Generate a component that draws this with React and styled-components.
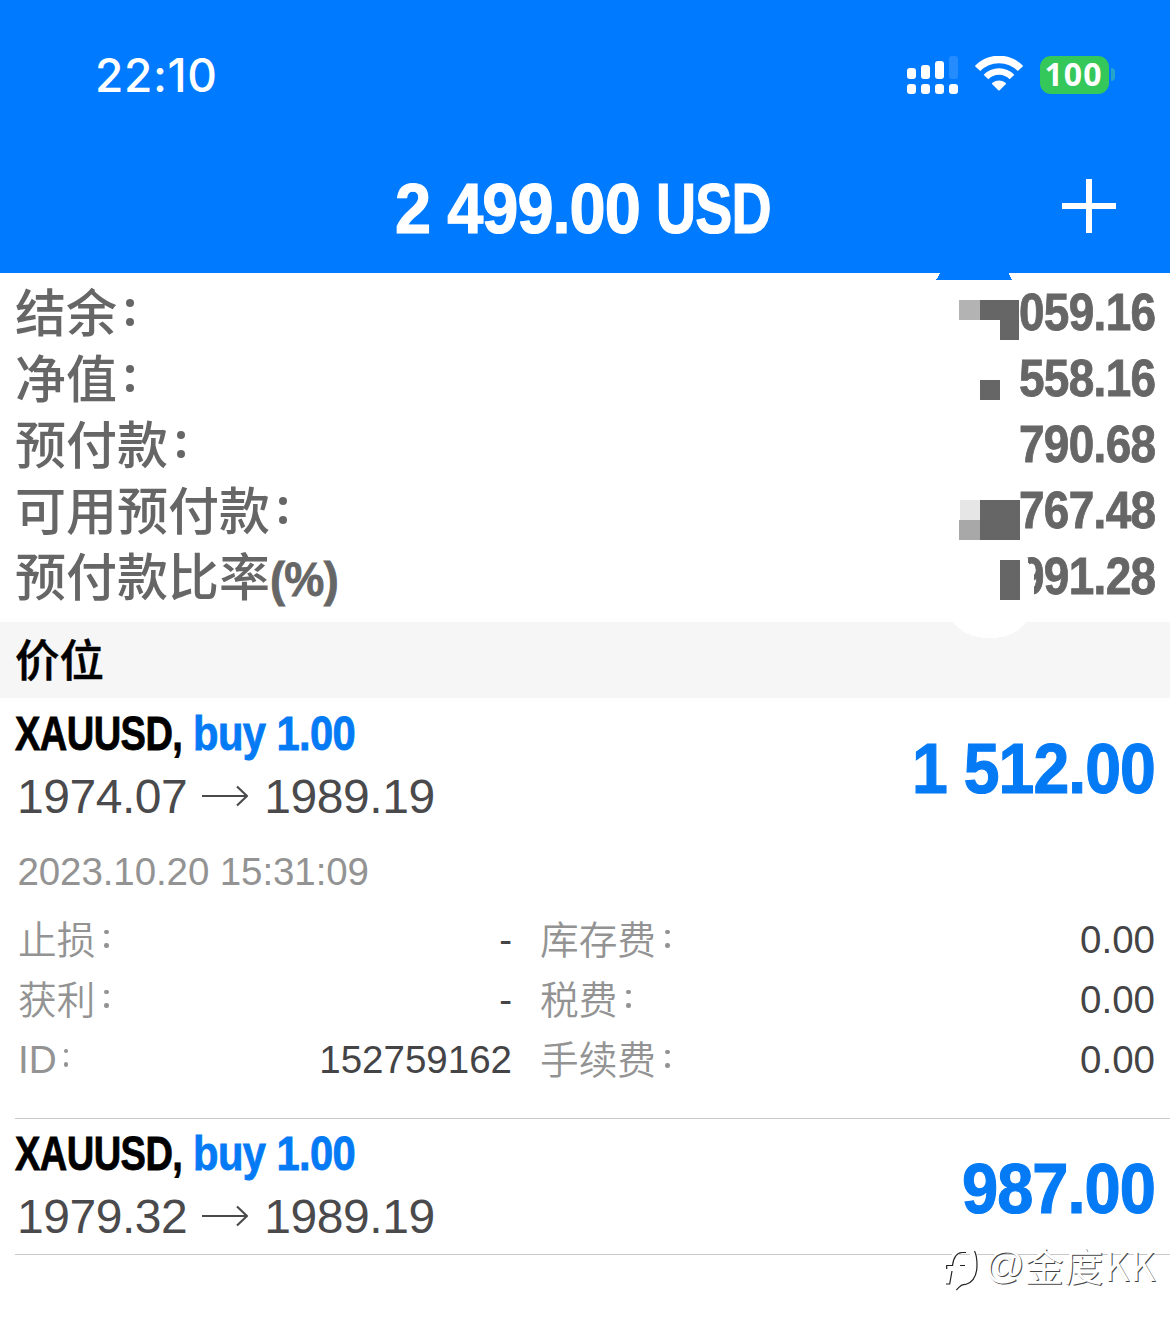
import React, { useLayoutEffect, useRef, useState } from "react";
import styled, { createGlobalStyle } from "styled-components";

const blue = "#007aff";
const linkBlue = "#057af5";
const sans = `"Liberation Sans", "Noto Sans CJK SC", sans-serif`;

const GlobalStyle = createGlobalStyle`
  * {
    box-sizing: border-box;
  }

  body {
    margin: 0;
    background: #fff;
    font-family: ${sans};
  }
`;

const Screen = styled.main`
  position: relative;
  width: 1170px;
  height: 1332px;
  overflow: hidden;
  background: #fff;
`;

const Header = styled.header`
  height: 273px;
  background: ${blue};
  color: #fff;
`;

const StatusBar = styled.div`
  display: flex;
  align-items: center;
  justify-content: space-between;
  height: 149px;
  padding: 0 55px 0 95px;
`;

const Clock = styled.div`
  font: 500 46px/60px Inter, sans-serif;
  letter-spacing: 0.6px;
`;

const StatusIcons = styled.div`
  display: flex;
  align-items: center;
`;

const Signal = styled.svg`
  width: 52px;
  height: 38px;
  margin-right: 15px;
`;

const Wifi = styled.svg`
  width: 50px;
  height: 38px;
  margin-right: 16px;
`;

const Battery = styled.div`
  width: 69px;
  height: 38px;
  padding-right: 2px;
  border-radius: 11px;
  background: #34c759;
  font: 700 32px/36px "Open Sans", sans-serif;
  letter-spacing: 1px;
  text-align: center;
`;

const BatteryCap = styled.div`
  width: 4px;
  height: 13px;
  margin-left: 2px;
  border-radius: 0 6px 6px 0;
  background: #27a5c8;
`;

const TitleBar = styled.div`
  display: flex;
  align-items: center;
  height: 118px;
  padding: 0 54px 0 395px;
`;

const Total = styled.div`
  display: flex;
  flex: 1;
  gap: 16px;
  padding-top: 1px;
`;

const AddIcon = styled.svg`
  width: 54px;
  height: 54px;
  margin-bottom: 4px;
`;

const Fit = styled.div`
  display: flex;
  flex: none;
  width: ${({ $width }) => $width}px;
  font-size: ${({ $size }) => $size}px;
  line-height: 1.15;
  font-weight: 700;
  letter-spacing: -0.015em;
  color: ${({ $color }) => $color};
  white-space: pre;
  -webkit-text-stroke: ${({ $size }) => $size / 60}px currentColor;

  span {
    flex: none;
    transform-origin: 0 50%;
  }
`;

const Summary = styled.section`
  height: 349px;
  padding: 7px 15px 0 15px;
  color: #666;
`;

const SummaryRow = styled.div`
  display: flex;
  align-items: center;
  justify-content: space-between;
  height: 66px;
`;

const SummaryLabel = styled.div`
  display: flex;
  align-items: center;
  padding-top: 4px;
  font: 500 51px/62px ${sans};
`;

const Colon = styled.i`
  display: flex;
  flex-direction: column;
  justify-content: space-between;
  width: ${({ $dot }) => $dot}px;
  height: ${({ $height }) => $height}px;
  margin: 0 0 5px ${({ $gap }) => $gap}px;

  &::before,
  &::after {
    content: "";
    height: ${({ $dot }) => $dot}px;
    border-radius: 50%;
    background: currentColor;
  }
`;

const SectionTitle = styled.h2`
  height: 76px;
  margin: 0;
  padding: 2px 0 0 15px;
  background: #f6f6f6;
  color: #000;
  font: 500 44.5px/76px ${sans};
  -webkit-text-stroke: 0.5px #000;
`;

const Position = styled.article`
  height: ${({ $open }) => ($open ? 421 : 136)}px;
  margin-left: 15px;
  padding-right: 15px;
  border-bottom: 1px solid #c8c8c8;
`;

const PositionHead = styled.div`
  display: flex;
  align-items: flex-start;
  justify-content: space-between;
  height: ${({ $open }) => ($open ? 136 : 135)}px;
  padding-top: ${({ $open }) => ($open ? 2 : 1)}px;
`;

const Profit = styled.div`
  padding-top: 28px;
`;

const Symbol = styled.div`
  display: flex;
  gap: 11px;
  height: 66px;
  align-items: center;
`;

const Prices = styled.div`
  display: flex;
  align-items: center;
  height: 60px;
  padding-left: 2px;
  color: #4a4a4c;
  font-size: 48px;
  letter-spacing: -0.45px;
`;

const Arrow = styled.svg`
  width: 46px;
  height: 22px;
  margin: 0 16px 0 15px;
`;

const OpenedAt = styled.div`
  height: 76px;
  padding-left: 2.5px;
  color: #939393;
  font-size: 38.5px;
  line-height: 76px;
  letter-spacing: -0.1px;
`;

const Details = styled.div`
  display: grid;
  grid-template-columns: 494px 1fr;
  column-gap: 28px;
  padding-left: 3px;
`;

const Detail = styled.div`
  display: flex;
  align-items: center;
  justify-content: space-between;
  height: 60px;
  font-size: 38.5px;
`;

const DetailLabel = styled.div`
  display: flex;
  align-items: center;
  padding-top: ${({ $latin }) => ($latin ? 0 : 2)}px;
  color: #939393;
  font: 350 38.7px/58px ${sans};
`;

const DetailValue = styled.div`
  color: #444446;
`;

const Redaction = styled.svg`
  position: absolute;
  top: 270px;
  left: 930px;
  width: 130px;
  height: 375px;
`;

const Watermark = styled.div`
  position: absolute;
  top: 1238px;
  left: 943px;
  display: flex;
  align-items: center;
  height: 54px;
  color: #fff;
  font: 400 39px/54px ${sans};
  text-shadow: 1px 1px 0 #444;

  svg {
    width: 42px;
    height: 54px;
  }
`;

const Handle = styled.span`
  margin-top: -3px;
  font-family: "Noto Sans CJK SC", sans-serif;
  line-height: 50px;
  letter-spacing: 0.7px;
`;

// Squeezes bold text to the widths of a condensed face.
const Condensed = ({ children, width, size, color }) => {
  const ref = useRef(null);
  const [scale, setScale] = useState(1);

  useLayoutEffect(() => {
    setScale(width / ref.current.offsetWidth);
  }, [children, width, size]);

  return (
    <Fit $width={width} $size={size} $color={color}>
      <span ref={ref} style={{ transform: `scaleX(${scale})` }}>
        {children}
      </span>
    </Fit>
  );
};

const summary = [
  { label: "结余", value: "059.16" },
  { label: "净值", value: "558.16" },
  { label: "预付款", value: "790.68" },
  { label: "可用预付款", value: "767.48" },
  { label: "预付款比率", suffix: "(%)", value: "991.28" },
];

const positions = [
  {
    open: "1974.07",
    current: "1989.19",
    profit: "1 512.00",
    profitWidth: 243,
    time: "2023.10.20 15:31:09",
    details: [
      { label: "止损", value: "-" },
      { label: "库存费", value: "0.00" },
      { label: "获利", value: "-" },
      { label: "税费", value: "0.00" },
      { label: "ID", value: "152759162", latin: true },
      { label: "手续费", value: "0.00" },
    ],
  },
  {
    open: "1979.32",
    current: "1989.19",
    profit: "987.00",
    profitWidth: 193,
  },
];

const PositionItem = ({ position }) => {
  const { open, current, profit, profitWidth, time, details } = position;

  return (
    <Position $open={!!details}>
      <PositionHead $open={!!details}>
        <div>
          <Symbol>
            <Condensed width={167} size={49} color="#000">
              XAUUSD,
            </Condensed>
            <Condensed width={162} size={49} color={linkBlue}>
              buy 1.00
            </Condensed>
          </Symbol>
          <Prices>
            {open}
            <Arrow viewBox="0 0 46 22" fill="none" stroke="currentColor">
              <path d="M0 11H45M35 1.5L45 11L35 20.5" strokeWidth="2.2" />
            </Arrow>
            {current}
          </Prices>
        </div>
        <Profit>
          <Condensed width={profitWidth} size={71} color={linkBlue}>
            {profit}
          </Condensed>
        </Profit>
      </PositionHead>

      {time && <OpenedAt>{time}</OpenedAt>}

      {details && (
        <Details>
          {details.map(({ label, value, latin }) => (
            <Detail key={label}>
              <DetailLabel $latin={latin}>
                {label}
                <Colon $dot={4.5} $height={18} $gap={latin ? 7 : 9} />
              </DetailLabel>
              <DetailValue>{value}</DetailValue>
            </Detail>
          ))}
        </Details>
      )}
    </Position>
  );
};

const App = () => (
  <Screen>
    <GlobalStyle />

    <Header>
      <StatusBar>
        <Clock>22:10</Clock>
        <StatusIcons>
          <Signal viewBox="0 0 52 38" fill="#fff">
            <rect x="0" y="12" width="9" height="11" rx="3" />
            <rect x="14" y="9" width="9" height="14" rx="3" />
            <rect x="28" y="5" width="9" height="18" rx="3" />
            <rect x="42" y="0" width="9" height="23" rx="3" opacity="0.14" />
            <rect x="0" y="28" width="9" height="10" rx="3" />
            <rect x="14" y="28" width="9" height="10" rx="3" />
            <rect x="28" y="28" width="9" height="10" rx="3" />
            <rect x="42" y="28" width="9" height="10" rx="3" />
          </Signal>
          <Wifi viewBox="0 0 50 38" fill="none" stroke="#fff">
            <path d="M3.5 12.5A30 30 0 0 1 46.5 12.5" strokeWidth="7.5" />
            <path d="M12 21A18 18 0 0 1 38 21" strokeWidth="6.5" />
            <path
              d="M19 27.5Q25 23.5 31 27.5L25 33.5Z"
              fill="#fff"
              strokeWidth="2"
              strokeLinejoin="round"
            />
          </Wifi>
          <Battery>100</Battery>
          <BatteryCap />
        </StatusIcons>
      </StatusBar>
      <TitleBar>
        <Total>
          <Condensed width={245} size={71} color="#fff">
            2 499.00
          </Condensed>
          <Condensed width={115} size={71} color="#fff">
            USD
          </Condensed>
        </Total>
        <AddIcon viewBox="0 0 54 54" stroke="#fff" strokeWidth="6">
          <path d="M27 0V54M0 27H54" />
        </AddIcon>
      </TitleBar>
    </Header>

    <Summary>
      {summary.map(({ label, suffix, value }) => (
        <SummaryRow key={label}>
          <SummaryLabel>
            {label}
            {suffix ? (
              <Condensed width={68} size={49} color="#666">
                {suffix}
              </Condensed>
            ) : (
              <Colon $dot={8} $height={27} $gap={9} />
            )}
          </SummaryLabel>
          <Condensed width={136} size={51} color="#666">
            {value}
          </Condensed>
        </SummaryRow>
      ))}
    </Summary>

    <SectionTitle>价位</SectionTitle>

    {positions.map((position) => (
      <PositionItem key={position.open} position={position} />
    ))}

    <Redaction viewBox="930 270 130 375" shapeRendering="crispEdges">
      <path d="M941 272H1008L1012 280H936Z" fill={blue} />
      <rect x="959" y="300" width="21" height="20" fill="#b3b3b3" />
      <path d="M980 300H1019V340H1000V320H980Z" fill="#666" />
      <rect x="980" y="380" width="20" height="20" fill="#666" />
      <rect x="960" y="500" width="20" height="20" fill="#e6e6e6" />
      <rect x="959" y="520" width="21" height="20" fill="#a8a8a8" />
      <rect x="980" y="500" width="40" height="40" fill="#666" />
      <path d="M1018 555H1027L1029 565L1034 574V598H1018Z" fill="#fff" />
      <rect x="1000" y="560" width="20" height="40" fill="#666" />
      <path d="M952 620Q963 638 990 638T1027 620Z" fill="#fff" />
    </Redaction>

    <Watermark>
      <svg viewBox="0 0 42 54" fill="none">
        <path
          d="M2 27H8Q10 13 21 12Q34 13 34 26Q34 42 20 46L13 51M8 30L5 46M16 27H22"
          stroke="#fff"
          strokeWidth="5"
        />
        <path
          d="M3.7 31V27.5H9.5Q11 15 19 14.5H23M9 33L6.7 46H3M17 27.5H22M31.5 13Q34 18 34 27Q34 43 22.7 46.5C17 46 17 49 13.3 52"
          stroke="#222"
          strokeWidth="1.2"
        />
      </svg>
      @<Handle>金度KK</Handle>
    </Watermark>
  </Screen>
);

export default App;
